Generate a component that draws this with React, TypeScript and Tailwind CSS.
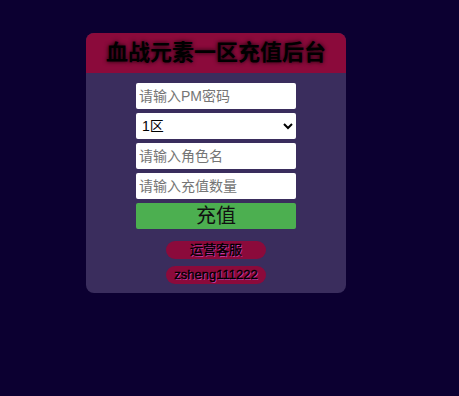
import React from 'react';

const font = { fontFamily: '"Liberation Sans", "Noto Sans CJK SC", sans-serif' };

export default function App() {
    return (
        <div className="w-[459px] h-[396px] bg-[#0c0031] pt-[33px] pl-[86px]" style={font}>
            <div className="w-[260px] rounded-lg overflow-hidden bg-[#3a2d5d]">
                {/* Header */}
                <div className="h-[40px] bg-[#8b0a3b] flex items-center justify-center">
                    <h1 className="text-[22px] font-bold text-black [text-shadow:0_0_4px_rgba(0,0,0,0.9)] leading-none">
                        血战元素一区充值后台
                    </h1>
                </div>

                {/* Form */}
                <div className="flex flex-col items-center pt-[10px] pb-[9px]">
                    <div className="w-[160px] flex flex-col gap-[4px]">
                        <input
                            type="text"
                            placeholder="请输入PM密码"
                            className="h-[26px] bg-white rounded-[2px] px-[3px] text-[14px] text-black placeholder:text-[#757575] outline-none"
                        />
                        <select className="h-[26px] bg-white rounded-[2px] px-[2px] text-[14px] text-black outline-none">
                            <option>1区</option>
                        </select>
                        <input
                            type="text"
                            placeholder="请输入角色名"
                            className="h-[26px] bg-white rounded-[2px] px-[3px] text-[14px] text-black placeholder:text-[#757575] outline-none"
                        />
                        <input
                            type="text"
                            placeholder="请输入充值数量"
                            className="h-[26px] bg-white rounded-[2px] px-[3px] text-[14px] text-black placeholder:text-[#757575] outline-none"
                        />
                        <button className="h-[26px] bg-[#4caf50] rounded-[2px] text-[20px] text-[#111] leading-none">
                            充值
                        </button>
                    </div>

                    <div className="mt-[12px] flex flex-col gap-[7px]">
                        <div className="w-[100px] h-[18px] rounded-full bg-[#8b0a3b] flex items-center justify-center text-[13px] text-black [-webkit-text-stroke:0.4px_black] [text-shadow:1px_1px_0_#d040b0]">
                            运营客服
                        </div>
                        <div className="w-[100px] h-[18px] rounded-full bg-[#8b0a3b] flex items-center justify-center text-[13px] text-black [-webkit-text-stroke:0.4px_black] [text-shadow:1px_1px_0_#d040b0]">
                            zsheng111222
                        </div>
                    </div>
                </div>
            </div>
        </div>
    );
}
